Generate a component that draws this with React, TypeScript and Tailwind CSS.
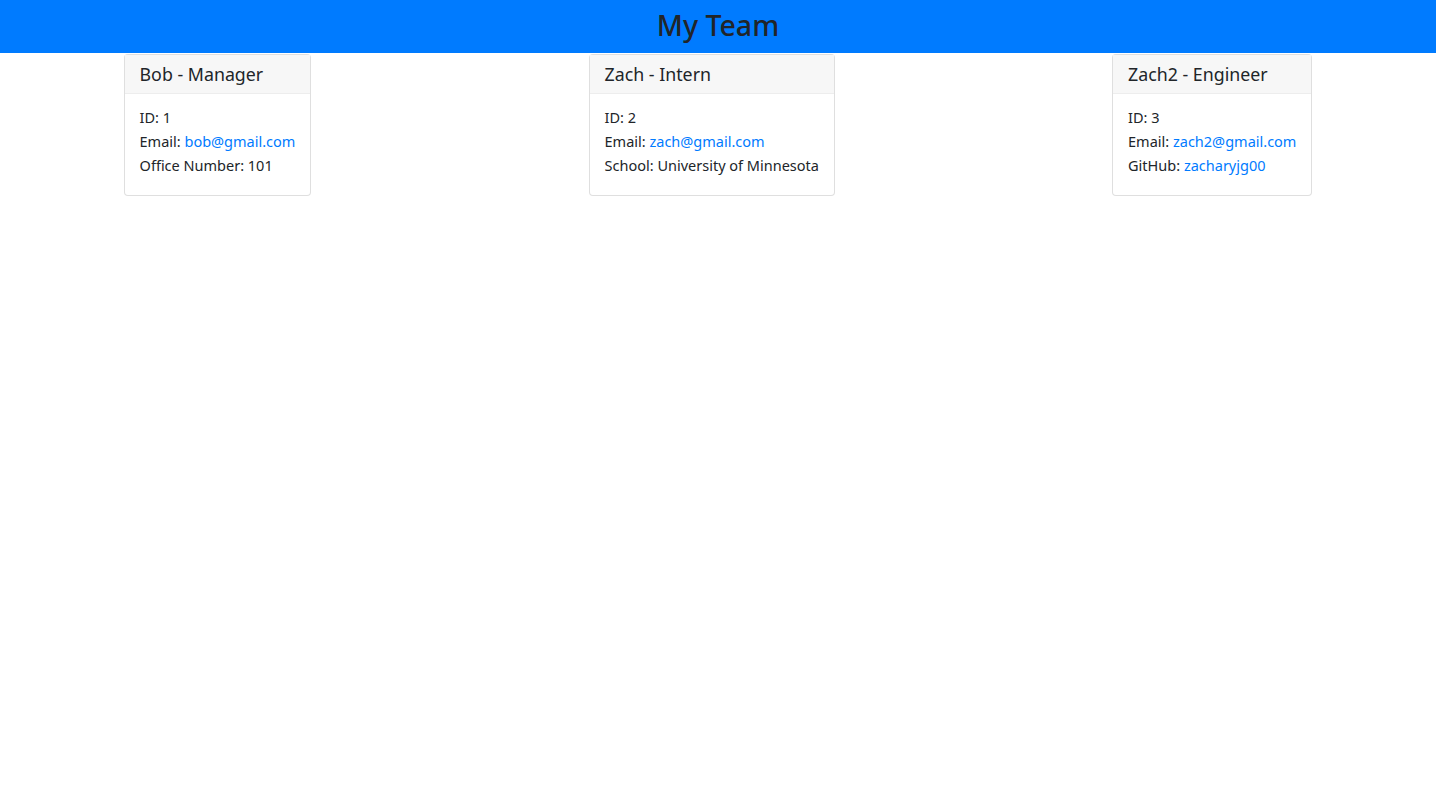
import React from "react";

type Member = {
  title: string;
  id: number;
  email: string;
  extraLabel: string;
  extraValue: string;
  extraLink?: boolean;
};

const team: Member[] = [
  { title: "Bob - Manager", id: 1, email: "bob@gmail.com", extraLabel: "Office Number", extraValue: "101" },
  { title: "Zach - Intern", id: 2, email: "zach@gmail.com", extraLabel: "School", extraValue: "University of Minnesota" },
  { title: "Zach2 - Engineer", id: 3, email: "zach2@gmail.com", extraLabel: "GitHub", extraValue: "zacharyjg00", extraLink: true },
];

const MemberCard: React.FC<{ m: Member }> = ({ m }) => (
  <div className="border border-black/[0.125] rounded-[4px] bg-white">
    <div className="h-[39px] flex items-center px-[15px] pt-px bg-[#f7f7f7] border-b border-black/[0.04] text-[17.8px] text-[#212529]">
      {m.title}
    </div>
    <div className="px-[15px] pt-[11px] pb-[18px] text-[14.5px] leading-[24px] text-[#212529]">
      <p>ID: {m.id}</p>
      <p>
        Email: <a className="text-[#007bff]">{m.email}</a>
      </p>
      <p>
        {m.extraLabel}:{" "}
        {m.extraLink ? <a className="text-[#007bff]">{m.extraValue}</a> : m.extraValue}
      </p>
    </div>
  </div>
);

export default function App() {
  return (
    <div className="min-h-screen bg-white overflow-x-hidden" style={{ fontFamily: '"Noto Sans", "Open Sans", sans-serif' }}>
      <header className="h-[53px] bg-[#007bff] flex items-center justify-center pb-[3px]">
        <h1 className="text-[28.5px] font-medium text-[#212529] leading-none">My Team</h1>
      </header>
      <div className="flex justify-around items-start mx-[-15px] pt-px">
        {team.map((m) => (
          <MemberCard key={m.id} m={m} />
        ))}
      </div>
    </div>
  );
}
